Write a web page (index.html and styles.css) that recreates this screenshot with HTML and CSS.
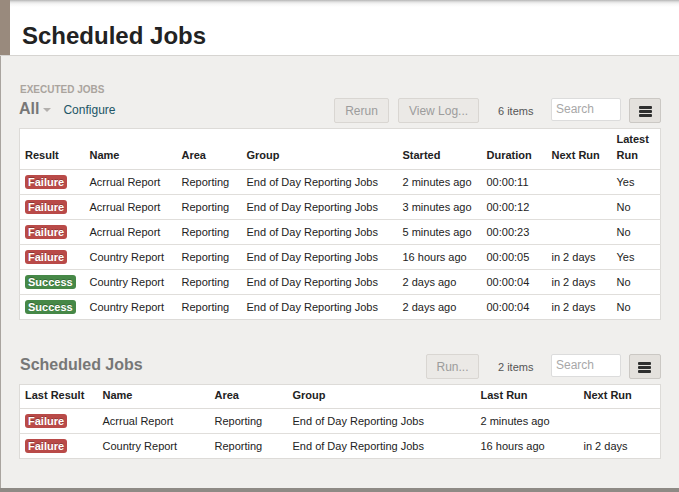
FILE: index.html
```html
<!DOCTYPE html>
<html>
<head>
<meta charset="utf-8">
<link rel="stylesheet" href="styles.css">
</head>
<body>
<div class="page">
  <header class="topbar">
    <div class="strip"></div>
    <h1 class="title">Scheduled Jobs</h1>
  </header>
  <main class="main">
    <div class="section-label">EXECUTED JOBS</div>
    <div class="toolbar">
      <div class="filter">
        <span class="all">All</span><span class="caret"></span>
        <a class="configure">Configure</a>
      </div>
      <button class="btn btn-rerun">Rerun</button>
      <button class="btn btn-log">View Log...</button>
      <span class="count">6 items</span>
      <div class="search">Search</div>
      <button class="menu-btn"><span></span><span></span><span></span></button>
    </div>
    <table class="grid grid1">
      <colgroup>
        <col style="width:65px"><col style="width:92px"><col style="width:65px"><col style="width:156px">
        <col style="width:84px"><col style="width:65px"><col style="width:65px"><col style="width:49px">
      </colgroup>
      <thead>
        <tr><th>Result</th><th>Name</th><th>Area</th><th>Group</th><th>Started</th><th>Duration</th><th>Next Run</th><th>Latest Run</th></tr>
      </thead>
      <tbody>
        <tr><td><span class="badge fail">Failure</span></td><td>Acrrual Report</td><td>Reporting</td><td>End of Day Reporting Jobs</td><td>2 minutes ago</td><td>00:00:11</td><td></td><td>Yes</td></tr>
        <tr><td><span class="badge fail">Failure</span></td><td>Acrrual Report</td><td>Reporting</td><td>End of Day Reporting Jobs</td><td>3 minutes ago</td><td>00:00:12</td><td></td><td>No</td></tr>
        <tr><td><span class="badge fail">Failure</span></td><td>Acrrual Report</td><td>Reporting</td><td>End of Day Reporting Jobs</td><td>5 minutes ago</td><td>00:00:23</td><td></td><td>No</td></tr>
        <tr><td><span class="badge fail">Failure</span></td><td>Country Report</td><td>Reporting</td><td>End of Day Reporting Jobs</td><td>16 hours ago</td><td>00:00:05</td><td>in 2 days</td><td>Yes</td></tr>
        <tr><td><span class="badge ok">Success</span></td><td>Country Report</td><td>Reporting</td><td>End of Day Reporting Jobs</td><td>2 days ago</td><td>00:00:04</td><td>in 2 days</td><td>No</td></tr>
        <tr><td><span class="badge ok">Success</span></td><td>Country Report</td><td>Reporting</td><td>End of Day Reporting Jobs</td><td>2 days ago</td><td>00:00:04</td><td>in 2 days</td><td>No</td></tr>
      </tbody>
    </table>

    <div class="toolbar toolbar2">
      <h2 class="subtitle">Scheduled Jobs</h2>
      <button class="btn btn-run">Run...</button>
      <span class="count">2 items</span>
      <div class="search">Search</div>
      <button class="menu-btn"><span></span><span></span><span></span></button>
    </div>
    <table class="grid grid2">
      <colgroup>
        <col style="width:78px"><col style="width:112px"><col style="width:78px"><col style="width:188px">
        <col style="width:103px"><col style="width:82px">
      </colgroup>
      <thead>
        <tr><th>Last Result</th><th>Name</th><th>Area</th><th>Group</th><th>Last Run</th><th>Next Run</th></tr>
      </thead>
      <tbody>
        <tr><td><span class="badge fail">Failure</span></td><td>Acrrual Report</td><td>Reporting</td><td>End of Day Reporting Jobs</td><td>2 minutes ago</td><td></td></tr>
        <tr><td><span class="badge fail">Failure</span></td><td>Country Report</td><td>Reporting</td><td>End of Day Reporting Jobs</td><td>16 hours ago</td><td>in 2 days</td></tr>
      </tbody>
    </table>
  </main>
  <div class="bottom-band"></div>
</div>
</body>
</html>
```

FILE: styles.css
```css
* { box-sizing: border-box; }
html, body { margin: 0; padding: 0; }
body {
  font-family: "Liberation Sans", Arial, sans-serif;
  font-size: 11px;
  color: #222;
  background: #f0efed;
}
.page {
  width: 679px;
  height: 492px;
  display: flex;
  flex-direction: column;
  overflow: hidden;
}
.topbar {
  height: 56px;
  flex: none;
  display: flex;
  background: linear-gradient(to bottom, #b5b5b5 0px, #e2e2e2 2px, #f6f6f6 4px, #ffffff 7px, #ffffff 100%);
  border-bottom: 1px solid #d6d4d1;
}
.strip {
  width: 10px;
  flex: none;
  background: #998a7d;
}
.title {
  margin: 0;
  padding: 22px 0 0 12px;
  font-size: 24px;
  line-height: 28px;
  font-weight: bold;
  color: #222;
}
.main {
  flex: 1;
  border-left: 1px solid #a9a49f;
  padding: 28px 18px 0 18px;
}
.section-label {
  font-size: 10px;
  line-height: 12px;
  font-weight: bold;
  color: #aaa49e;
  padding-left: 1px;
}
.toolbar {
  display: flex;
  align-items: center;
  height: 25px;
  margin-top: 2px;
}
.filter {
  display: flex;
  align-items: center;
  margin-right: auto;
  margin-top: -3px;
}
.all {
  font-size: 16px;
  font-weight: bold;
  color: #777;
  line-height: 20px;
}
.caret {
  width: 0;
  height: 0;
  border-left: 4px solid transparent;
  border-right: 4px solid transparent;
  border-top: 4px solid #b3b0ad;
  margin: 2px 0 0 4px;
}
.configure {
  margin-left: 12px;
  font-size: 12px;
  color: #215566;
  line-height: 20px;
  margin-top: 1px;
}
.btn {
  height: 25px;
  font-family: "Liberation Sans", Arial, sans-serif;
  font-size: 12px;
  color: #9c9c9c;
  background: #ebe9e6;
  border: 1px solid #d9d6d2;
  border-radius: 2px;
  padding: 0;
  text-align: center;
}
.btn-rerun { width: 55px; }
.btn-log { width: 81px; margin-left: 9px; }
.btn-run { width: 53px; margin-left: auto; }
.count {
  font-size: 11px;
  color: #555;
  margin-left: 19px;
  width: 34px;
  white-space: nowrap;
}
.search {
  width: 70px;
  height: 23px;
  margin-left: 19px;
  margin-top: -2px;
  background: #fff;
  border: 1px solid #dcdcdc;
  border-radius: 2px;
  color: #a8a8a8;
  font-size: 12px;
  line-height: 20px;
  padding-left: 4px;
}
.menu-btn {
  width: 32px;
  height: 25px;
  margin-left: 8px;
  background: #e4e1dd;
  border: 1px solid #cbc8c4;
  border-radius: 2px;
  padding: 0;
  display: flex;
  flex-direction: column;
  align-items: center;
  justify-content: center;
  gap: 1px;
  padding-top: 2px;
}
.menu-btn span {
  display: block;
  width: 13px;
  height: 3px;
  background: #2e2e2e;
  border-radius: 1px;
}
.grid {
  width: 641px;
  margin-top: 5px;
  border-collapse: collapse;
  table-layout: fixed;
  background: #fff;
  border: 1px solid #dddbd8;
}
.grid th {
  text-align: left;
  vertical-align: bottom;
  font-weight: bold;
  font-size: 11px;
  line-height: 16px;
  padding: 2px 5px 6px;
  color: #222;
  border-bottom: 1px solid #dedcd9;
}
.grid2 th {
  padding-bottom: 5px;
}
.grid td {
  height: 25px;
  padding: 0 5px;
  line-height: 16px;
  vertical-align: middle;
  white-space: nowrap;
  overflow: hidden;
  border-bottom: 1px solid #e0dedb;
  color: #222;
}
.grid tbody tr:last-child td { border-bottom: none; }
.badge {
  display: inline-block;
  font-size: 11px;
  font-weight: bold;
  line-height: 14px;
  padding: 0 3px;
  color: #fff;
  border-radius: 3px;
  text-shadow: 0 -1px 0 rgba(0,0,0,0.25);
  vertical-align: middle;
  margin-top: -2px;
}
.badge.fail { background: #b94a48; }
.badge.ok { background: #468847; }
.toolbar2 {
  margin-top: 34px;
}
.subtitle {
  margin: -3px auto 0 1px;
  font-size: 16px;
  font-weight: bold;
  color: #777;
  line-height: 20px;
}
.bottom-band {
  height: 4px;
  flex: none;
  background: #8e8a85;
}
```
